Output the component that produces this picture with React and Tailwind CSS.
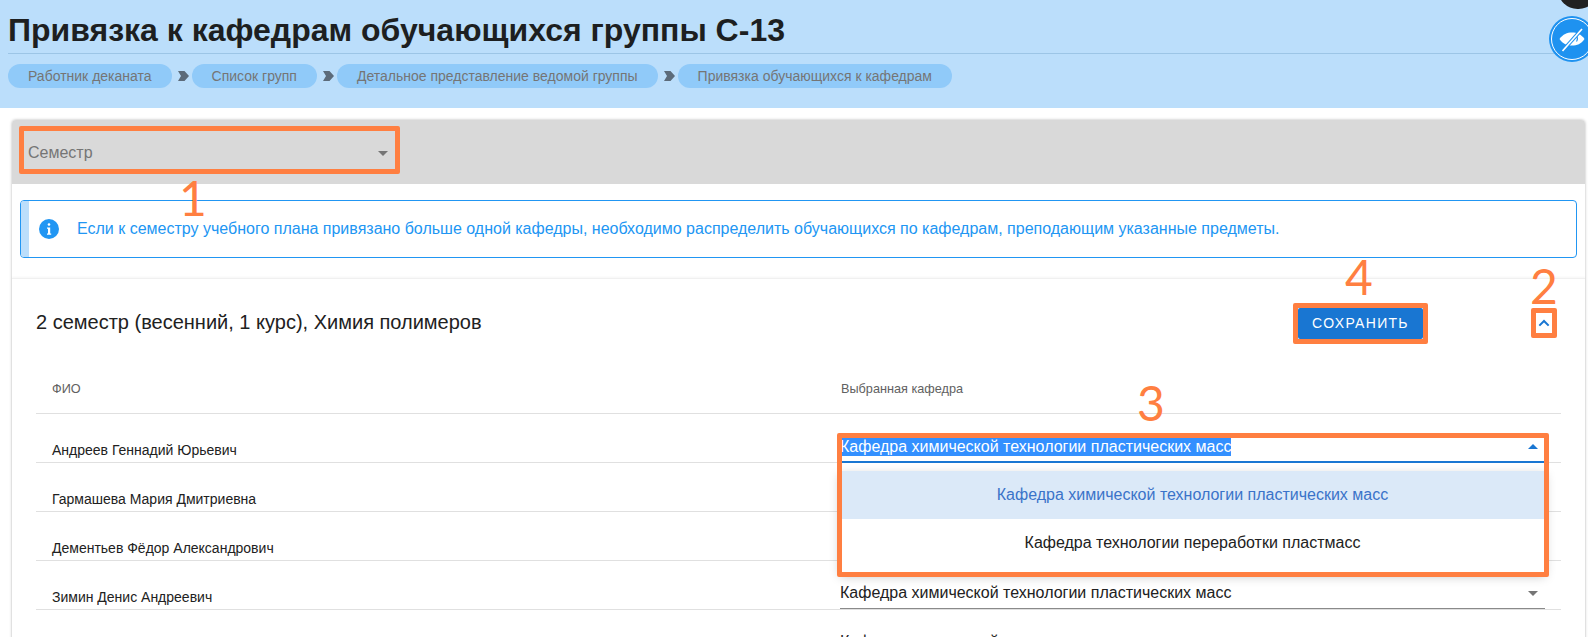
import { useState } from 'react';

const crumbs = [
  'Работник деканата',
  'Список групп',
  'Детальное представление ведомой группы',
  'Привязка обучающихся к кафедрам',
];

const students = [
  'Андреев Геннадий Юрьевич',
  'Гармашева Мария Дмитриевна',
  'Дементьев Фёдор Александрович',
  'Зимин Денис Андреевич',
  '',
];

const CHEMISTRY = 'Кафедра химической технологии пластических масс';
const RECYCLING = 'Кафедра технологии переработки пластмасс';

function CrumbArrow() {
  return (
    <svg width="11" height="10" viewBox="0 0 11 10" className="shrink-0 ml-[6px] mr-[3px]">
      <path d="M0 0h6.500L11 5 6.500 10H0l3-5z" fill="#5c6b7a" />
    </svg>
  );
}

function Caret({ up, color }) {
  return (
    <svg width="10" height="5" viewBox="0 0 10 5" className="shrink-0">
      <path d={up ? 'M0 5l5-5 5 5z' : 'M0 0l5 5 5-5z'} fill={color} />
    </svg>
  );
}

function Digit({ children, className }) {
  return (
    <span className={`absolute h-[40px] font-['Lato',sans-serif] font-normal text-[48px] leading-none text-[#ff7f41] ${className}`}>
      {children}
    </span>
  );
}

function Frame({ className }) {
  return <div className={`absolute border-[5px] border-[#ff7f41] rounded-[2px] pointer-events-none ${className}`} />;
}

function DepartmentSelect({ open, text }) {
  const [current] = useState(text);
  return (
    <div className={`flex items-center justify-between w-[705px] pr-[7px] ${open ? 'h-[34px] pt-[3px] border-b-2 border-[#1976d2]' : 'h-[33px] pt-[2px] border-b border-[#8a8a8a]'}`}>
      {open ? (
        <span className="text-[16px] leading-[18px] text-white bg-[#3390ff]">{current}</span>
      ) : (
        <span className="text-[16px] leading-[18px] text-[#212121]">{current}</span>
      )}
      <Caret up={open} color={open ? '#1976d2' : '#757575'} />
    </div>
  );
}

export default function App() {
  return (
    <div className="relative h-[637px] overflow-hidden bg-white font-['Liberation_Sans',Arial,sans-serif]">
      <header className="h-[108px] bg-[#bbdefb] pt-[10px] px-2">
        <h1 className="text-[32px] leading-[40px] pb-[3px] font-bold text-[#1d1f21] border-b border-[#9cc5e6]">
          Привязка к кафедрам обучающихся группы С-13
        </h1>
        <nav className="flex items-center mt-[10px]">
          {crumbs.map((c, i) => (
            <div key={c} className="flex items-center">
              {i > 0 && <CrumbArrow />}
              <span className="h-[24px] leading-[24px] px-5 rounded-full bg-[#90caf9] text-[14px] text-[#757575]">{c}</span>
            </div>
          ))}
        </nav>
      </header>

      {/* top right floating buttons */}
      <div className="absolute -top-[30px] -right-[10px] w-[40px] h-[39px] rounded-full bg-[#212121]" />
      <div className="absolute top-[16px] left-[1549px] w-[46px] h-[46px] rounded-full bg-[#1e92f0] flex items-center justify-center">
        <div className="w-[42px] h-[42px] rounded-full border-[1.5px] border-white flex items-center justify-center">
          <svg width="26" height="26" viewBox="0 0 26 26" fill="none">
            <path d="M.5 13C4 8 8 6.500 13 6.500S22 8 25.500 13C22 18 18 19.500 13 19.500S4 18 .5 13z" fill="#fff" />
            <path d="M17 9.500a5 5 0 0 1 .5 6" stroke="#1e92f0" strokeWidth="1.200" />
            <path d="M3.500 25L23 3" stroke="#1e92f0" strokeWidth="3.600" />
            <path d="M3.500 25L23 3" stroke="#fff" strokeWidth="1.700" />
          </svg>
        </div>
      </div>

      <main className="pt-[12px] pl-[12px] pr-[3px]">
        <div className="rounded-[4px] bg-white shadow-[0_0_3px_rgba(0,0,0,0.3)]">
          <div className="relative h-[64px] bg-[#d9d9d9] rounded-t-[4px] px-[12px] pt-[11px]">
            <div className="relative flex items-center justify-between h-[38px] w-[371px] pt-[6px] pl-[4px] pr-[7px]">
              <span className="text-[16px] text-[#757575]">Семестр</span>
              <Caret color="#757575" />
              <Frame className="left-[-5px] -top-[5px] w-[381px] h-[48px]" />
              <Digit className="left-[155px] top-[43px]">1</Digit>
            </div>
          </div>

          <div className="pt-[16px] pl-[8px] pr-[8px] pb-[20px]">
            <div className="flex items-center h-[58px] border border-[#2196f3] rounded-[4px] overflow-hidden">
              <div className="w-[8px] h-full bg-[#bbdefb]" />
              <svg width="20" height="20" viewBox="0 0 20 20" className="ml-[10px] shrink-0">
                <circle cx="10" cy="10" r="10" fill="#2196f3" />
                <rect x="8.700" y="4.200" width="2.600" height="2.600" rx="1.300" fill="#fff" />
                <path d="M8 8.400h3.200v6h1v1.300H8v-1.300h1v-4.700H8z" fill="#fff" />
              </svg>
              <p className="ml-[18px] text-[16px] text-[#2196f3]">
                Если к семестру учебного плана привязано больше одной кафедры, необходимо распределить обучающихся по кафедрам, преподающим указанные предметы.
              </p>
            </div>
          </div>

          <section className="border-t border-[#f0f0f0] shadow-[0_-1px_2px_rgba(0,0,0,0.04)] pl-[24px] pr-[24px]">
            <div className="flex items-center h-[86px]">
              <h2 className="text-[20px] text-[#212121] w-[1262px]">2 семестр (весенний, 1 курс), Химия полимеров</h2>
              <div className="relative mt-[3px]">
                <button className="block w-[125px] h-[31px] bg-[#1976d2] text-white text-[14px] tracking-[1.300px] rounded-[2px]">
                  СОХРАНИТЬ
                </button>
                <Frame className="-left-[5px] -top-[5px] w-[135px] h-[41px]" />
                <Digit className="left-[47px] -top-[55px]">4</Digit>
              </div>
              <div className="relative ml-[113px] mt-[2px] w-[16px] h-[20px] flex items-center justify-center">
                <svg width="16" height="16" viewBox="0 0 24 24" fill="none" stroke="#1976d2" strokeWidth="3">
                  <path d="M5 16l7-7 7 7" />
                </svg>
                <Frame className="-left-[5px] -top-[5px] w-[26px] h-[30px]" />
                <Digit className="-left-[6px] -top-[51px]">2</Digit>
              </div>
            </div>

            <div className="flex items-center h-[49px] border-b border-[#e0e0e0] text-[12.700px] text-[#616161] pt-[1px]">
              <div className="w-[804px] pl-[16px]">ФИО</div>
              <div className="relative pl-[1px]">
                Выбранная кафедра
                <Digit className="left-[297px] -top-[1px]">3</Digit>
              </div>
            </div>

            {students.map((name, i) => (
              <div key={i} className="flex h-[49px] border-b border-[#e0e0e0]">
                <div className="w-[804px] pl-[16px] pt-[27px] text-[14px] leading-[18px] text-[#212121]">{name}</div>
                <div className="relative pt-[15px]">
                  {i === 0 && (
                    <>
                      <DepartmentSelect open text={CHEMISTRY} />
                      <div className="absolute z-10 left-0 top-[57px] w-[705px] h-[101px] bg-white shadow-[0_4px_10px_rgba(0,0,0,0.25)] text-[16px] text-center">
                        <div className="h-[48px] leading-[48px] bg-[#dbe9f8] text-[#3a73c9]">{CHEMISTRY}</div>
                        <div className="h-[48px] leading-[48px] text-[#212121]">{RECYCLING}</div>
                      </div>
                      <Frame className="z-20 -left-[3px] top-[19px] w-[712px] h-[144px]" />
                    </>
                  )}
                  {i >= 3 && <DepartmentSelect text={CHEMISTRY} />}
                </div>
              </div>
            ))}
          </section>
        </div>
      </main>
    </div>
  );
}
